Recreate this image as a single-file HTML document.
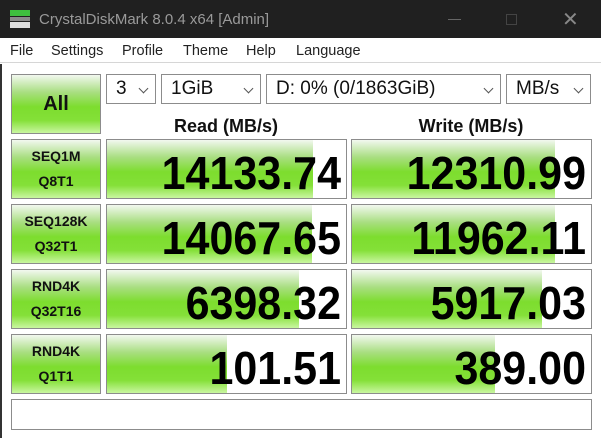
<!DOCTYPE html>
<html><head><meta charset="utf-8"><style>
*{box-sizing:border-box;margin:0;padding:0}
body{width:601px;height:438px;overflow:hidden;background:#fff;font-family:"Liberation Sans",sans-serif;position:relative}
.abs{position:absolute}
.title{left:0;top:0;width:601px;height:38px;background:#202020;color:#9a9a9a;font-size:15px}
.menu{left:0;top:38px;width:601px;height:25px;background:#fff;border-bottom:1px solid #d6d6d6;font-size:14.5px;color:#222}
.menu span{position:absolute;top:5px}
.g{background:linear-gradient(#f2f8ef 0%,#a8de80 30%,#7ddd2e 55%,#84e038 78%,#c9f6a0 100%)}
.btn{border:1px solid #8c8c8c;display:flex;align-items:center;justify-content:center;text-align:center;font-weight:bold;color:#111}
.box{border:1px solid #8c8c8c;background:#fff}
.box .f{position:absolute;left:0;top:0;bottom:0}
.box .n{position:absolute;right:5px;top:8px;font-weight:bold;font-size:43px;color:#000;transform:scaleY(1.08);transform-origin:top}
.dd{border:1px solid #8c8c8c;background:#fff;font-size:19px;color:#111;padding:3px 0 0 9px}
.dd i{position:absolute;right:8px;top:10px;width:7px;height:7px;border-right:1px solid #555;border-bottom:1px solid #555;transform:rotate(45deg)}
.hd{font-weight:bold;font-size:18px;color:#111;text-align:center}
.lb{font-size:14px;line-height:25px}
</style></head><body>
<div class="abs title">
 <div class="abs" style="left:10px;top:10px;width:20px;height:6px;background:#3fbf3f"></div>
 <div class="abs" style="left:10px;top:17px;width:20px;height:4px;background:#8a8a8a"></div>
 <div class="abs" style="left:10px;top:22px;width:20px;height:6px;background:#ddd"></div>
 <span class="abs" style="left:39px;top:11px">CrystalDiskMark 8.0.4 x64 [Admin]</span>
 <div class="abs" style="left:448px;top:19px;width:13px;height:1px;background:#666"></div>
 <div class="abs" style="left:506px;top:14px;width:11px;height:11px;border:1px solid #444"></div>
 <span class="abs" style="left:562px;top:7px;font-size:20px;color:#888">✕</span>
</div>
<div class="abs menu"><span style="left:10px">File</span><span style="left:51px">Settings</span><span style="left:122px">Profile</span><span style="left:183px">Theme</span><span style="left:246px">Help</span><span style="left:296px">Language</span></div>
<div class="abs" style="left:0;top:64px;width:2px;height:374px;background:#333"></div>

<div class="abs btn g" style="left:11px;top:74px;width:90px;height:60px;font-size:20px">All</div>
<div class="abs dd" style="left:106px;top:74px;width:50px;height:30px">3<i></i></div>
<div class="abs dd" style="left:161px;top:74px;width:100px;height:30px">1GiB<i></i></div>
<div class="abs dd" style="left:266px;top:74px;width:235px;height:30px">D: 0% (0/1863GiB)<i></i></div>
<div class="abs dd" style="left:506px;top:74px;width:85px;height:30px">MB/s<i></i></div>
<div class="abs hd" style="left:106px;top:116px;width:240px">Read (MB/s)</div>
<div class="abs hd" style="left:351px;top:116px;width:240px">Write (MB/s)</div>

<div class="abs btn g lb" style="left:11px;top:139px;width:90px;height:60px">SEQ1M<br>Q8T1</div>
<div class="abs box" style="left:106px;top:139px;width:241px;height:60px"><div class="f g" style="width:206px"></div><div class="n">14133.74</div></div>
<div class="abs box" style="left:351px;top:139px;width:241px;height:60px"><div class="f g" style="width:203px"></div><div class="n">12310.99</div></div>

<div class="abs btn g lb" style="left:11px;top:204px;width:90px;height:60px">SEQ128K<br>Q32T1</div>
<div class="abs box" style="left:106px;top:204px;width:241px;height:60px"><div class="f g" style="width:205px"></div><div class="n">14067.65</div></div>
<div class="abs box" style="left:351px;top:204px;width:241px;height:60px"><div class="f g" style="width:203px"></div><div class="n">11962.11</div></div>

<div class="abs btn g lb" style="left:11px;top:269px;width:90px;height:60px">RND4K<br>Q32T16</div>
<div class="abs box" style="left:106px;top:269px;width:241px;height:60px"><div class="f g" style="width:192px"></div><div class="n">6398.32</div></div>
<div class="abs box" style="left:351px;top:269px;width:241px;height:60px"><div class="f g" style="width:190px"></div><div class="n">5917.03</div></div>

<div class="abs btn g lb" style="left:11px;top:334px;width:90px;height:60px">RND4K<br>Q1T1</div>
<div class="abs box" style="left:106px;top:334px;width:241px;height:60px"><div class="f g" style="width:120px"></div><div class="n">101.51</div></div>
<div class="abs box" style="left:351px;top:334px;width:241px;height:60px"><div class="f g" style="width:143px"></div><div class="n">389.00</div></div>

<div class="abs box" style="left:11px;top:399px;width:581px;height:31px"></div>
</body></html>
